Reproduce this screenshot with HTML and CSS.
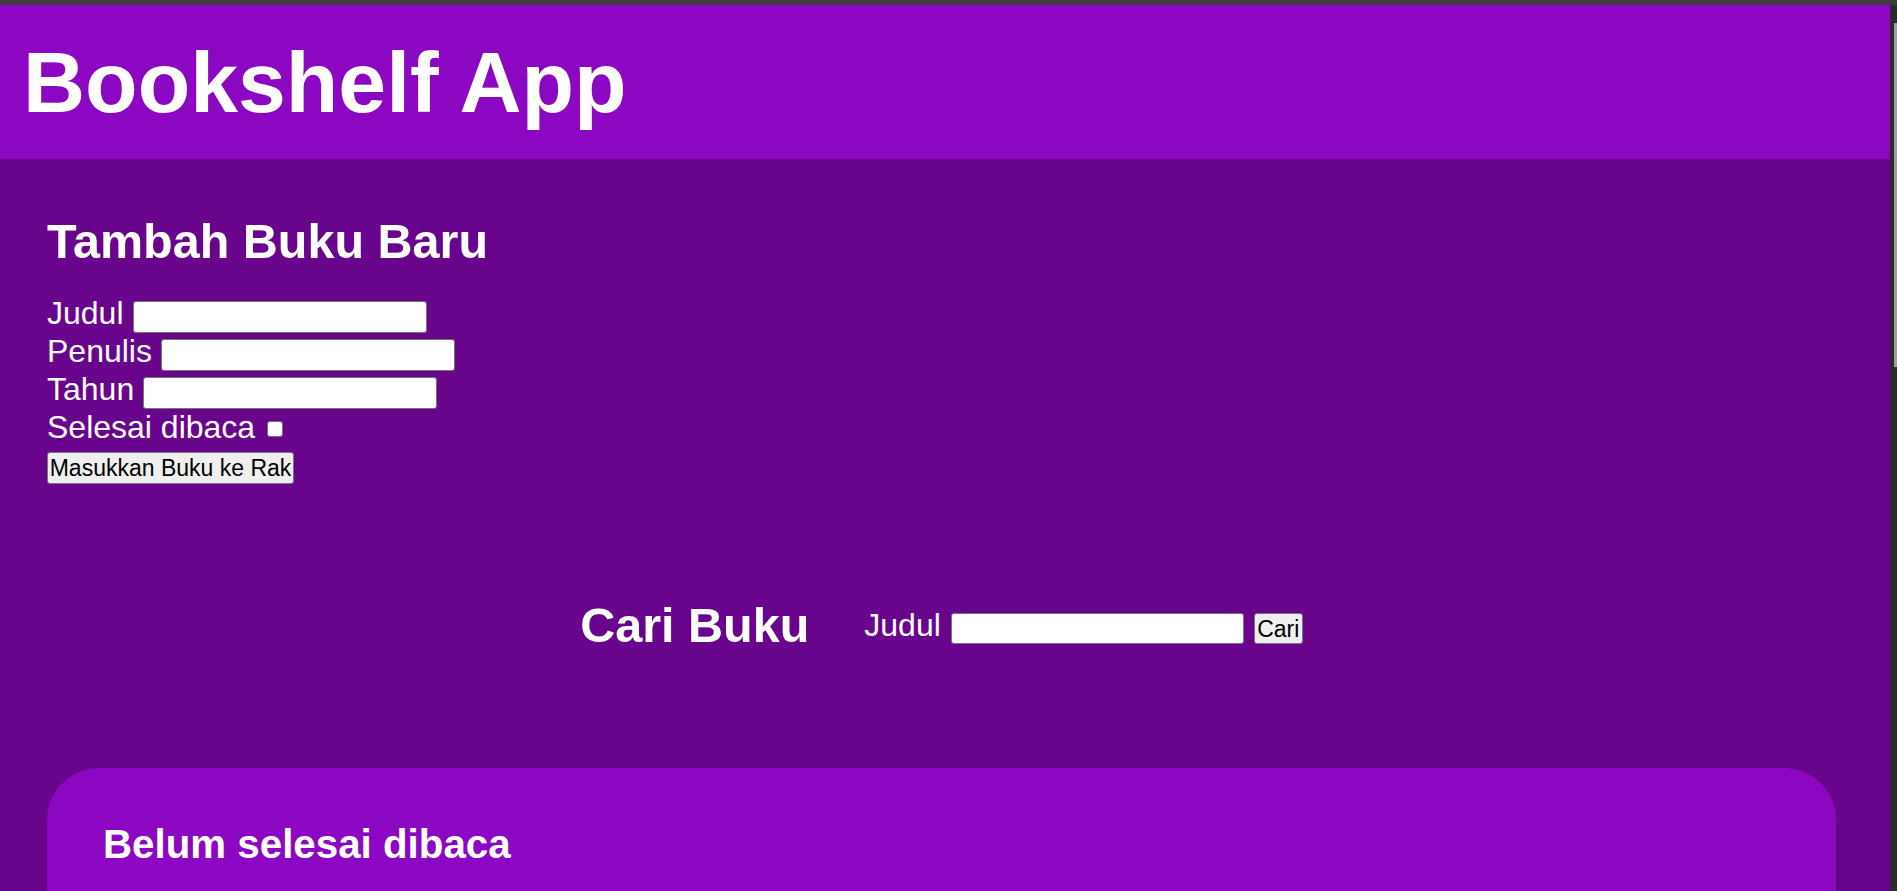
FILE: index.html
```html
<!DOCTYPE html>
<html lang="id">
<head>
<meta charset="utf-8">
<title>Bookshelf App</title>
<link rel="stylesheet" href="styles.css">
</head>
<body>
<div class="frame">
  <div class="top-edge"></div>
  <div class="window">
    <div class="page">
      <header class="app-header">
        <h1 class="app-title">Bookshelf App</h1>
      </header>
      <main class="content">
        <section class="add-book">
          <h2 class="section-title">Tambah Buku Baru</h2>
          <form class="add-form">
            <div class="field"><label class="field-label" for="judul">Judul</label><input class="text-input" id="judul" type="text"></div>
            <div class="field"><label class="field-label" for="penulis">Penulis</label><input class="text-input" id="penulis" type="text"></div>
            <div class="field"><label class="field-label" for="tahun">Tahun</label><input class="text-input" id="tahun" type="text"></div>
            <div class="field"><label class="field-label" for="selesai">Selesai dibaca</label><input class="check-input" id="selesai" type="checkbox"></div>
            <button class="btn btn-submit" type="button">Masukkan Buku ke Rak</button>
          </form>
        </section>
        <section class="search">
          <h2 class="section-title search-title">Cari Buku</h2>
          <form class="search-form">
            <label class="search-label" for="cari">Judul</label>
            <input class="text-input search-input" id="cari" type="text">
            <button class="btn btn-search" type="button">Cari</button>
          </form>
        </section>
        <section class="shelf">
          <h2 class="shelf-title">Belum selesai dibaca</h2>
        </section>
      </main>
    </div>
    <div class="scrollbar"><div class="scroll-thumb"></div></div>
  </div>
</div>
</body>
</html>
```
FILE: styles.css
```css
html, body {
  margin: 0;
  height: 100%;
  overflow: hidden;
}

body {
  background: #3c3c3c;
  font-family: "Liberation Sans", Arial, sans-serif;
  color: #ffffff;
}

.frame {
  display: flex;
  flex-direction: column;
  height: 100vh;
}

.top-edge {
  flex: none;
  height: 5px;
  background: #3c3c3c;
}

.window {
  flex: 1;
  display: flex;
  min-height: 0;
}

.page {
  flex: 1;
  background: #69058c;
  overflow: hidden;
}

.scrollbar {
  flex: none;
  width: 7px;
  background: #2b2b2b;
  display: flex;
  justify-content: flex-end;
  align-items: flex-start;
}

.scroll-thumb {
  margin-top: 18px;
  width: 3px;
  height: 344px;
  background: #9e9e9e;
}

.app-header {
  background: #8c07c2;
  padding: 28px 23px;
}

.app-title {
  margin: 0;
  font-size: 86px;
  line-height: 98px;
  font-weight: bold;
}

.content {
  padding: 55px 54px 0 47px;
}

.section-title {
  margin: 0;
  font-size: 48.5px;
  line-height: 55px;
  font-weight: bold;
}

.add-form {
  margin-top: 25px;
}

.field {
  display: flex;
  align-items: flex-start;
  gap: 9px;
  height: 38px;
  font-size: 32px;
  line-height: 38px;
}

.text-input {
  box-sizing: border-box;
  width: 294px;
  height: 32px;
  margin: 7px 0 0 0;
  padding: 0 4px;
  background: #ffffff;
  border: 1px solid #767676;
  border-radius: 3px;
  font-family: "Liberation Sans", Arial, sans-serif;
  font-size: 23px;
}

.check-input {
  -webkit-appearance: none;
  appearance: none;
  box-sizing: border-box;
  width: 16px;
  height: 16px;
  margin: 13px 0 0 3px;
  background: #ffffff;
  border: 1.5px solid #767676;
  border-radius: 3px;
}

.btn {
  box-sizing: border-box;
  background: #efefef;
  border: 1px solid #767676;
  border-radius: 3px;
  color: #000000;
  font-family: "Liberation Sans", Arial, sans-serif;
  font-size: 23px;
  line-height: 28px;
  padding: 0 1px;
  white-space: nowrap;
}

.btn-submit {
  display: block;
  margin-top: 6px;
  width: 247px;
  height: 32px;
}

.search {
  margin-top: 114px;
  display: flex;
  justify-content: center;
  align-items: flex-start;
}

.search-title {
  margin-right: 55px;
}

.search-form {
  display: flex;
  align-items: flex-start;
}

.search-label {
  margin-top: 9px;
  margin-right: 10px;
  font-size: 32px;
  line-height: 37px;
}

.search-input {
  width: 293px;
  height: 31px;
  margin-top: 15px;
}

.btn-search {
  margin-top: 15px;
  margin-left: 10px;
  width: 49px;
  height: 31px;
}

.shelf {
  margin-top: 115px;
  min-height: 400px;
  padding: 54px 56px;
  background: #8c07c2;
  border-radius: 52px;
}

.shelf-title {
  margin: 0;
  font-size: 40.3px;
  line-height: 46px;
  font-weight: bold;
}
```
